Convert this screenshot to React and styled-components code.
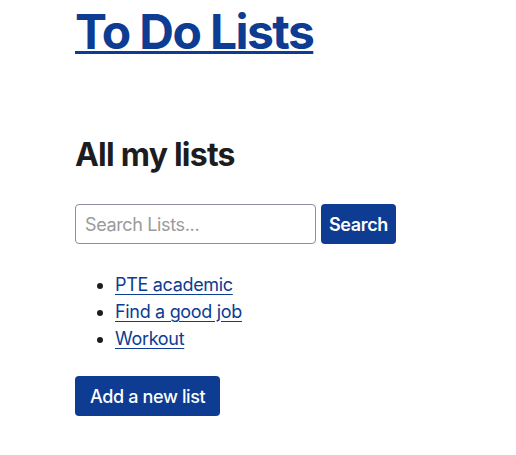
import React from "react";
import styled, { createGlobalStyle } from "styled-components";

const Global = createGlobalStyle`
  html, body { margin: 0; padding: 0; background: #fff; }
  body { font-family: Inter, "Noto Sans", sans-serif; color: #1d1d1f; letter-spacing: -0.02em; }
`;

const Page = styled.main`
  padding: 0 0 0 75px;
`;

const Title = styled.h1`
  margin: 0;
  padding-top: 3px;
  font-size: 48px;
  font-weight: 700;
  line-height: 58px;
  letter-spacing: -0.033em;
  a { color: #0d3c92; text-decoration: underline; text-decoration-thickness: 3px; text-underline-offset: 2px; }
`;

const Heading = styled.h2`
  margin: 74px 0 0;
  font-size: 32px;
  font-weight: 700;
  line-height: 40px;
  letter-spacing: -0.024em;
  color: #1d1d1f;
`;

const SearchForm = styled.form`
  display: flex;
  gap: 5px;
  margin-top: 29px;
`;

const Input = styled.input`
  box-sizing: border-box;
  width: 241px;
  height: 40px;
  padding: 0 9px;
  border: 1px solid #8b8ea6;
  border-radius: 4px;
  font-family: inherit;
  font-size: 18px;
  letter-spacing: -0.02em;
  color: #1d1d1f;
  &::placeholder { color: #9a9a9a; }
`;

const Button = styled.button`
  box-sizing: border-box;
  height: 40px;
  padding: 0 ${p => p.$pad || 8}px;
  border: none;
  border-radius: 4px;
  background: #0d3c92;
  color: #fff;
  font-family: inherit;
  font-size: 18px;
  letter-spacing: -0.02em;
  font-weight: ${p => p.$weight || 600};
  cursor: pointer;
`;

const List = styled.ul`
  margin: 27px 0 0;
  padding-left: 40px;
  font-size: 18px;
  line-height: 27px;
  li::marker { color: #1d1d1f; }
  a { color: #0d3c92; text-decoration: underline; text-underline-offset: 3px; }
`;

const Footer = styled.div`
  margin-top: 24px;
`;

export default function App() {
  return (
    <>
      <Global />
      <Page>
        <Title><a href="#">To Do Lists</a></Title>
        <Heading>All my lists</Heading>
        <SearchForm onSubmit={e => e.preventDefault()}>
          <Input placeholder="Search Lists..." />
          <Button type="submit">Search</Button>
        </SearchForm>
        <List>
          <li><a href="#">PTE academic</a></li>
          <li><a href="#">Find a good job</a></li>
          <li><a href="#">Workout</a></li>
        </List>
        <Footer>
          <Button type="button" $pad={15} $weight={500}>Add a new list</Button>
        </Footer>
      </Page>
    </>
  );
}
